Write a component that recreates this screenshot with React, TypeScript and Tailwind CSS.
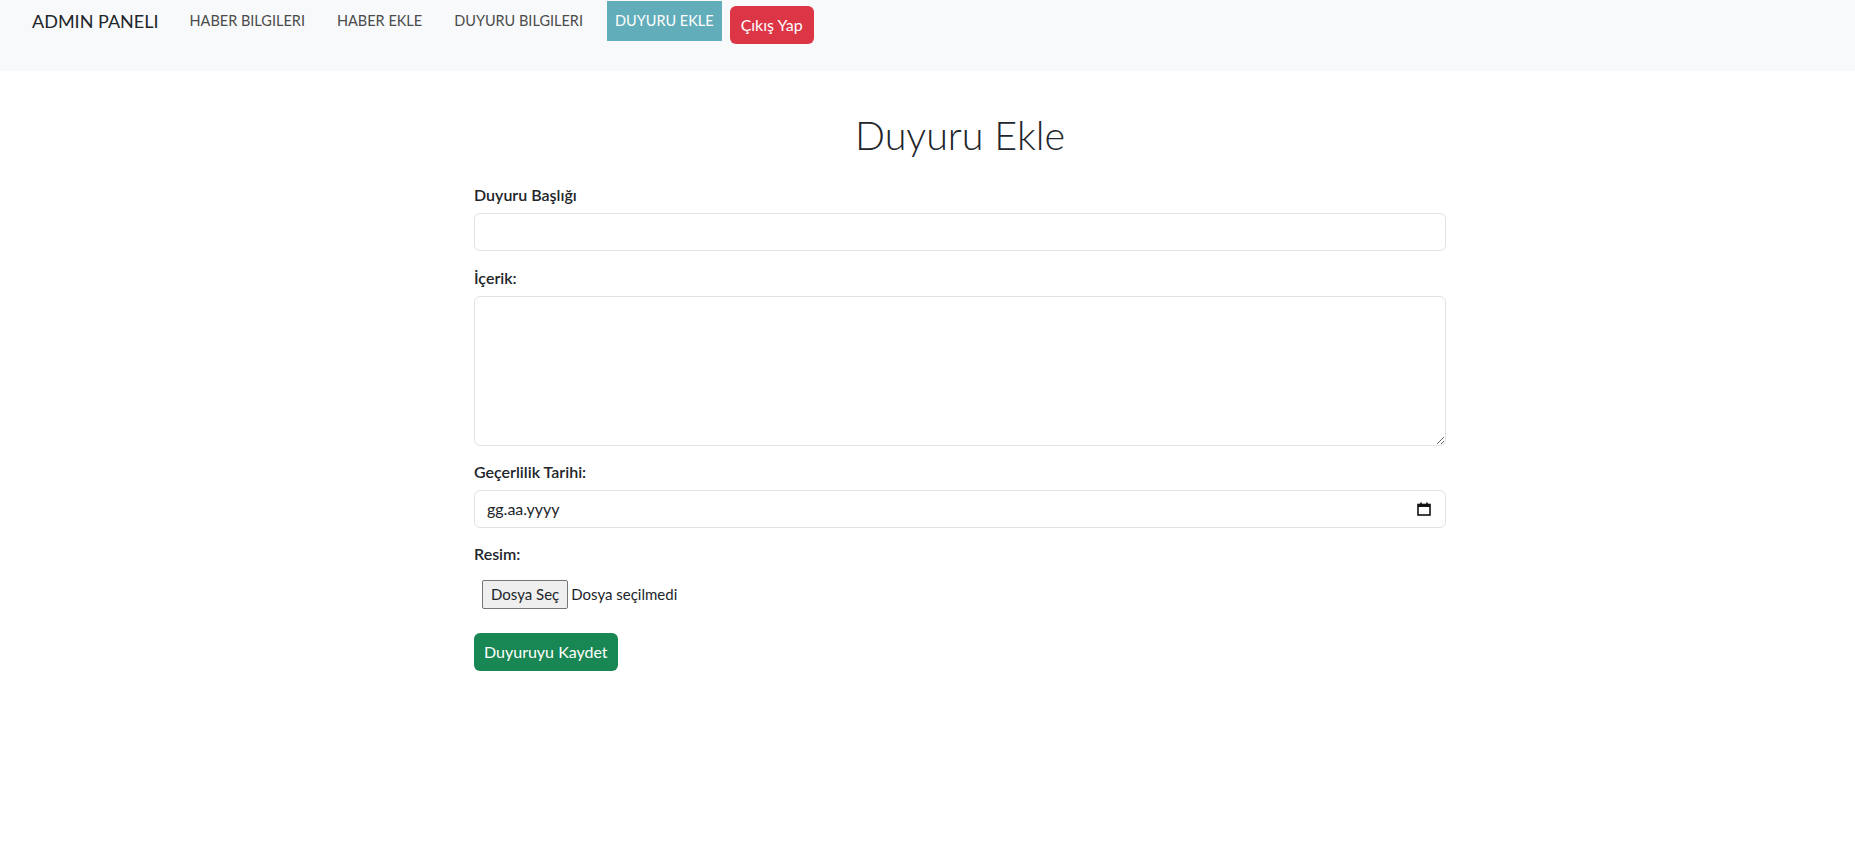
import React from "react";

const font = { fontFamily: "Lato, 'Noto Sans', sans-serif" };

function Label({ children }: { children: React.ReactNode }) {
  return (
    <div className="h-[24px] leading-[24px] text-[16px] font-semibold text-[#212529] mb-[6px]">
      {children}
    </div>
  );
}

export default function App() {
  return (
    <div className="min-h-[859px] bg-white text-[#212529]" style={font}>
      <nav className="h-[71px] bg-[#f8f9fa] flex items-start pl-[32px]">
        <div className="mt-[1px] h-[40px] leading-[40px] text-[18px] text-[#212529]">
          ADMIN PANELI
        </div>
        <div className="flex items-start ml-[23px] gap-[16px] mt-[1px]">
          <a className="h-[40px] leading-[40px] px-[8px] text-[14.5px] text-[#4b4b4b]">HABER BILGILERI</a>
          <a className="h-[40px] leading-[40px] px-[8px] text-[14.5px] text-[#4b4b4b]">HABER EKLE</a>
          <a className="h-[40px] leading-[40px] px-[8px] text-[14.5px] text-[#4b4b4b]">DUYURU BILGILERI</a>
          <a className="h-[40px] leading-[40px] px-[8px] text-[14.5px] text-white bg-[#62adba]">DUYURU EKLE</a>
        </div>
        <button className="ml-[8px] mt-[6px] h-[38px] px-[11px] rounded-[6px] bg-[#dc3545] text-white text-[16px]">
          Çıkış Yap
        </button>
      </nav>

      <div className="w-[972px] ml-[474px]">
        <h1 className="mt-[40px] h-[48px] leading-[48px] text-[39.5px] font-light text-center text-[#212529]">
          Duyuru Ekle
        </h1>

        <div className="mt-[24px]">
          <Label>Duyuru Başlığı</Label>
          <div className="h-[38px] border border-[#dee2e6] rounded-[6px] bg-white" />
        </div>

        <div className="mt-[15px]">
          <Label>İçerik:</Label>
          <textarea className="block w-full h-[150px] border border-[#dee2e6] rounded-[6px] bg-white outline-none" />
        </div>

        <div className="mt-[14px]">
          <Label>Geçerlilik Tarihi:</Label>
          <div className="h-[38px] border border-[#dee2e6] rounded-[6px] bg-white flex items-center justify-between pl-[12px] pr-[14px]">
            <span className="text-[16px] text-[#212529]">gg.aa.yyyy</span>
            <svg width="14" height="14" viewBox="0 0 14 14">
              <rect x="1" y="2.5" width="12" height="10.5" fill="none" stroke="#111" strokeWidth="1.6" />
              <rect x="1" y="2" width="12" height="3" fill="#111" />
              <rect x="3.2" y="0.5" width="1.6" height="2.5" fill="#111" />
              <rect x="9.2" y="0.5" width="1.6" height="2.5" fill="#111" />
            </svg>
          </div>
        </div>

        <div className="mt-[14px]">
          <div className="h-[24px] leading-[24px] text-[16px] font-semibold text-[#212529]">Resim:</div>
          <div className="mt-[14px] flex items-center ml-[8px]">
            <div className="h-[29px] px-[8px] flex items-center border border-[#767676] rounded-[2px] bg-[#efefef] text-[15px] text-[#212529]">
              Dosya Seç
            </div>
            <span className="ml-[3px] text-[15px] text-[#212529]">Dosya seçilmedi</span>
          </div>
        </div>

        <button className="mt-[24px] h-[38px] px-[10px] rounded-[6px] bg-[#198754] text-white text-[16px]">
          Duyuruyu Kaydet
        </button>
      </div>
    </div>
  );
}
